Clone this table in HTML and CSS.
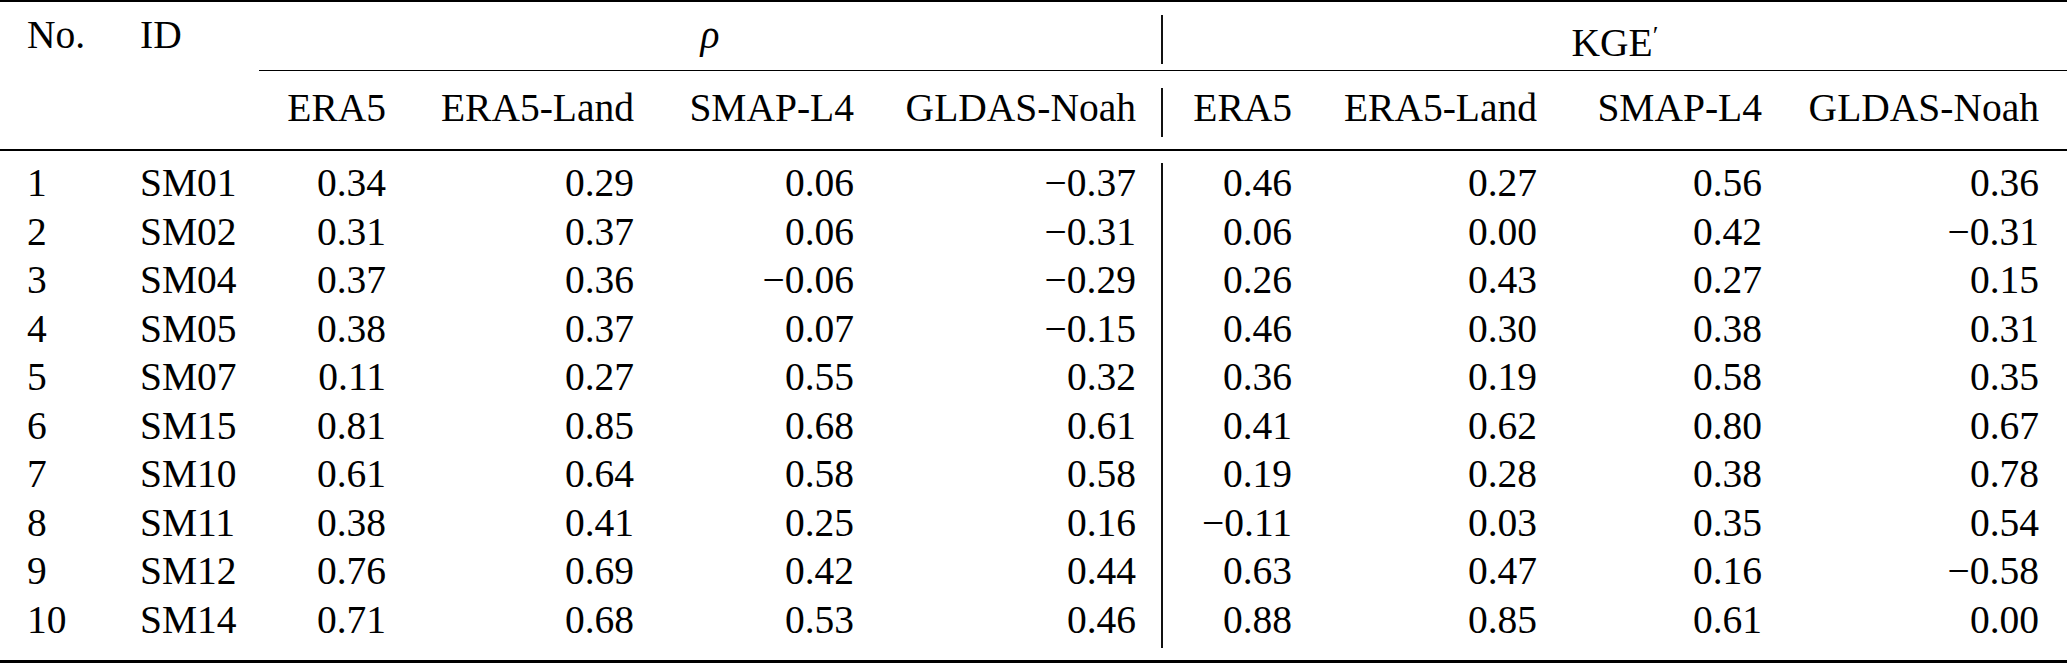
FILE: index.html
```html
<!DOCTYPE html>
<html>
<head>
<meta charset="utf-8">
<title>Table</title>
<link rel="stylesheet" href="styles.css">
</head>
<body>
<div class="tbl">
  <div class="rule rule-top"></div>

  <div class="c l">No.</div>
  <div class="c l">ID</div>
  <div class="c grp grp-rho sep"><i class="rho">ρ</i></div>
  <div class="c grp grp-kge">KGE<span class="prime">′</span></div>

  <div class="rule rule-cmid"></div>

  <div class="c first-h">ERA5</div>
  <div class="c">ERA5-Land</div>
  <div class="c">SMAP-L4</div>
  <div class="c sep">GLDAS-Noah</div>
  <div class="c">ERA5</div>
  <div class="c">ERA5-Land</div>
  <div class="c">SMAP-L4</div>
  <div class="c last">GLDAS-Noah</div>

  <div class="rule rule-mid"></div>

  <div class="c l">1</div><div class="c l">SM01</div><div class="c">0.34</div><div class="c">0.29</div><div class="c">0.06</div><div class="c sep">−0.37</div><div class="c">0.46</div><div class="c">0.27</div><div class="c">0.56</div><div class="c last">0.36</div>
  <div class="c l">2</div><div class="c l">SM02</div><div class="c">0.31</div><div class="c">0.37</div><div class="c">0.06</div><div class="c sep">−0.31</div><div class="c">0.06</div><div class="c">0.00</div><div class="c">0.42</div><div class="c last">−0.31</div>
  <div class="c l">3</div><div class="c l">SM04</div><div class="c">0.37</div><div class="c">0.36</div><div class="c">−0.06</div><div class="c sep">−0.29</div><div class="c">0.26</div><div class="c">0.43</div><div class="c">0.27</div><div class="c last">0.15</div>
  <div class="c l">4</div><div class="c l">SM05</div><div class="c">0.38</div><div class="c">0.37</div><div class="c">0.07</div><div class="c sep">−0.15</div><div class="c">0.46</div><div class="c">0.30</div><div class="c">0.38</div><div class="c last">0.31</div>
  <div class="c l">5</div><div class="c l">SM07</div><div class="c">0.11</div><div class="c">0.27</div><div class="c">0.55</div><div class="c sep">0.32</div><div class="c">0.36</div><div class="c">0.19</div><div class="c">0.58</div><div class="c last">0.35</div>
  <div class="c l">6</div><div class="c l">SM15</div><div class="c">0.81</div><div class="c">0.85</div><div class="c">0.68</div><div class="c sep">0.61</div><div class="c">0.41</div><div class="c">0.62</div><div class="c">0.80</div><div class="c last">0.67</div>
  <div class="c l">7</div><div class="c l">SM10</div><div class="c">0.61</div><div class="c">0.64</div><div class="c">0.58</div><div class="c sep">0.58</div><div class="c">0.19</div><div class="c">0.28</div><div class="c">0.38</div><div class="c last">0.78</div>
  <div class="c l">8</div><div class="c l">SM11</div><div class="c">0.38</div><div class="c">0.41</div><div class="c">0.25</div><div class="c sep">0.16</div><div class="c">−0.11</div><div class="c">0.03</div><div class="c">0.35</div><div class="c last">0.54</div>
  <div class="c l">9</div><div class="c l">SM12</div><div class="c">0.76</div><div class="c">0.69</div><div class="c">0.42</div><div class="c sep">0.44</div><div class="c">0.63</div><div class="c">0.47</div><div class="c">0.16</div><div class="c last">−0.58</div>
  <div class="c l">10</div><div class="c l">SM14</div><div class="c">0.71</div><div class="c">0.68</div><div class="c">0.53</div><div class="c sep">0.46</div><div class="c">0.88</div><div class="c">0.85</div><div class="c">0.61</div><div class="c last">0.00</div>

  <div class="rule rule-bottom"></div>
</div>
</body>
</html>
```

FILE: styles.css
```css
html, body {
  margin: 0;
  padding: 0;
  background: #ffffff;
}

body {
  width: 2067px;
  height: 663px;
  overflow: hidden;
  font-family: "Liberation Serif", serif;
}

.tbl {
  display: grid;
  grid-template-columns: 113px 146px 154px 248px 220px 282px 156px 245px 225px minmax(0, 1fr);
  font-size: 39.5px;
  color: #000;
  width: 2067px;
}

.c {
  font-family: "Liberation Serif", serif;
  height: 48.5px;
  line-height: 41.5px;
  padding: 0 27px 7px 0;
  text-align: right;
  white-space: nowrap;
  box-sizing: border-box;
  min-width: 0;
}

.c.l {
  text-align: left;
  padding-left: 27px;
  padding-right: 0;
}

.c.last {
  padding-right: 28px;
}

.c.sep {
  border-right: 2px solid #111;
  padding-right: 25px;
}

.first-h {
  grid-column-start: 3;
}

.grp {
  text-align: center;
  padding-left: 0;
  padding-right: 0;
}

.c.grp.sep {
  padding-right: 0;
}

.grp-rho {
  grid-column: 3 / 7;
}

.grp-kge {
  grid-column: 7 / 11;
}

.rho {
  font-style: italic;
}

.prime {
  font-size: 26px;
  vertical-align: 12px;
}

.rule {
  background: #000;
}

.rule-top {
  grid-column: 1 / -1;
  height: 2px;
  margin-bottom: 13px;
}

.rule-cmid {
  grid-column: 3 / -1;
  height: 1px;
  margin-top: 6.5px;
  margin-bottom: 17px;
}

.rule-mid {
  grid-column: 1 / -1;
  height: 2px;
  margin-top: 12.5px;
  margin-bottom: 12px;
}

.rule-bottom {
  grid-column: 1 / -1;
  height: 3px;
  margin-top: 12px;
}
```
